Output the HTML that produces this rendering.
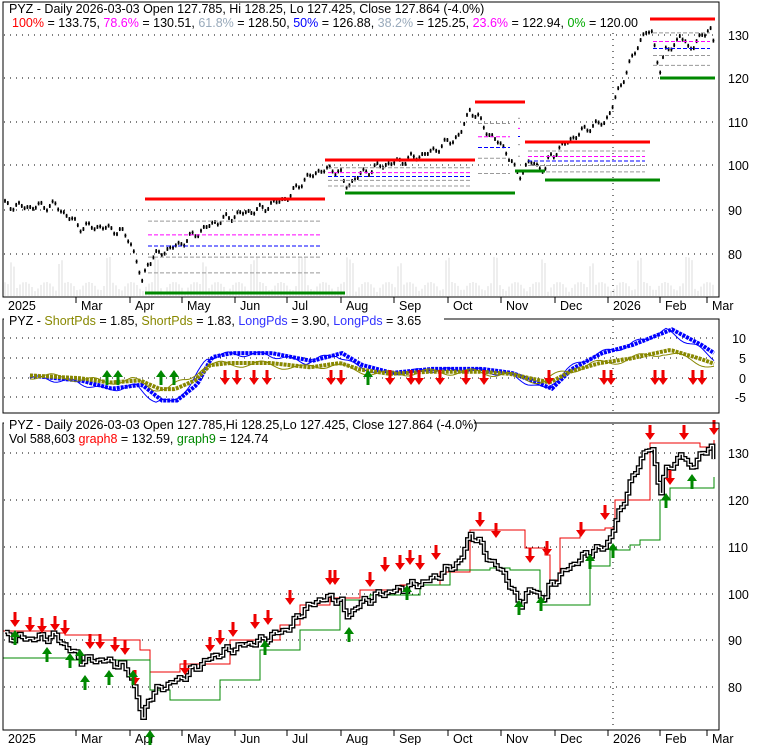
<!DOCTYPE html>
<html><head><meta charset="utf-8"><style>
body{margin:0;background:#fff;width:780px;height:745px;overflow:hidden}
svg{display:block;font-family:"Liberation Sans",sans-serif}
</style></head><body>
<svg id="s" width="780" height="745" xmlns="http://www.w3.org/2000/svg">
<rect width="780" height="745" fill="#fff"/>
<g id="g"></g>
<rect x="3" y="2" width="716" height="295" fill="none" stroke="#000"/>
<rect x="3" y="319" width="716" height="94" fill="none" stroke="#000"/>
<rect x="3" y="423" width="716" height="307" fill="none" stroke="#000"/>
<rect x="4" y="3" width="620" height="27" fill="#fff"/>
<text x="9" y="13" font-size="12.5">PYZ - Daily 2026-03-03 Open 127.785, Hi 128.25, Lo 127.425, Close 127.864 (-4.0%)</text>
<text x="12" y="27" font-size="12.5"><tspan fill="#f00">100%</tspan> = 133.75, <tspan fill="#f0f">78.6%</tspan> = 130.51, <tspan fill="#9ab">61.8%</tspan> = 128.50, <tspan fill="#00f">50%</tspan> = 126.88, <tspan fill="#9ab">38.2%</tspan> = 125.25, <tspan fill="#f0f">23.6%</tspan> = 122.94, <tspan fill="#0a0">0%</tspan> = 120.00</text>
<rect x="4" y="313" width="440" height="14" fill="#fff"/>
<text x="9" y="325" font-size="12.5">PYZ - <tspan fill="#880">ShortPds</tspan> = 1.85, <tspan fill="#880">ShortPds</tspan> = 1.83, <tspan fill="#33f">LongPds</tspan> = 3.90, <tspan fill="#33f">LongPds</tspan> = 3.65</text>
<rect x="4" y="417" width="470" height="30" fill="#fff"/>
<text x="9" y="429" font-size="12.5">PYZ - Daily 2026-03-03 Open 127.785,Hi 128.25,Lo 127.425, Close 127.864 (-4.0%)</text>
<text x="9" y="443" font-size="12.5">Vol 588,603 <tspan fill="#f00">graph8</tspan> = 132.59, <tspan fill="#080">graph9</tspan> = 124.74</text>
</svg>
<script>
var g=document.getElementById('g'),h='';
function L(x1,y1,x2,y2,c,w,d){h+='<line x1="'+x1+'" y1="'+y1+'" x2="'+x2+'" y2="'+y2+'" stroke="'+c+'" stroke-width="'+(w||1)+'"'+(d?' stroke-dasharray="'+d+'"':'')+'/>';}
function T(x,y,t,a){h+='<text x="'+x+'" y="'+y+'" font-size="12.5"'+(a?' text-anchor="'+a+'"':'')+'>'+t+'</text>';}
var months=[[8,'2025'],[81,'Mar'],[135,'Apr'],[187,'May'],[240,'Jun'],[292,'Jul'],[346,'Aug'],[399,'Sep'],[453,'Oct'],[506,'Nov'],[560,'Dec'],[613,'2026'],[665,'Feb'],[712,'Mar']];
function grid(ys,y0,y1){ys.forEach(function(y){L(4,y,718,y,'#000',1,'1 5');});L(613,y0,613,y1,'#000',1,'1 5');}
grid([35,78,122,165,210,254],3,296);
grid([338,358,378,397],320,412);
grid([453,500,547,594,640,687],424,729);
[[35,130],[78,120],[122,110],[165,100],[210,90],[254,80]].forEach(function(a){T(728,a[0]+5,a[1]);});
[[338,'10'],[358,'5'],[378,'0'],[397,'-5']].forEach(function(a){T(746,a[0]+5,a[1],'end');});
[[453,130],[500,120],[547,110],[594,100],[640,90],[687,80]].forEach(function(a){T(728,a[0]+5,a[1]);});
months.forEach(function(m,i){ if(i>0){L(m[0]-5,297,m[0]-5,303,'#000');L(m[0]-5,730,m[0]-5,736,'#000');}
 T(m[0],310,m[1]);T(m[0],743,m[1]);});
var kp=[[5,91],[30,90.5],[55,91],[65,89],[80,86],[100,86],[120,85],[130,83],[138,77],[142,73],[148,78],[160,80],[180,82],[200,85],[215,87],[240,89],[260,90],[290,93],[300,96],[320,99],[340,99],[345,95],[360,98],[380,100],[400,101],[430,103],[460,107],[470,113],[478,111],[490,107],[505,104],[515,99],[520,98],[530,101],[545,99],[550,102],[570,106],[590,109],[605,110],[615,115],[625,121],[635,126],[645,131],[652,130],[660,122],[665,126],[675,128],[680,130],[688,127],[700,129],[710,132],[714,128]];
function P(x){for(var i=1;i<kp.length;i++)if(x<=kp[i][0]){var a=kp[i-1],b=kp[i];return a[1]+(b[1]-a[1])*(x-a[0])/(b[0]-a[0]);}return 128;}
var pts=[];for(var x=5;x<=714;x+=2.8){var n=Math.sin(x*1.7)*0.6+Math.sin(x*0.37)*0.5;pts.push([x,P(x)+n]);}
for(var x=5;x<714;x+=3){var v=4+Math.abs(Math.sin(x*0.9))*10+(Math.sin(x*0.13)>0.9?25:0);L(x,296,x,296-v,'#ddd');}
pts.forEach(function(p){var y=35+(130-p[1])*4.36;L(p[0],y-2,p[0],y+2,'#000',1.6);L(p[0]-1,y,p[0]+1,y,'#000');});
var segs=[[145,325,199,293],[325,475,160,193],[475,515,102,193],[515,525,102,171],[525,650,142,180],[650,715,19,78]];
segs.forEach(function(s){var r=s[3]-s[2];[['#999',0.236],['#f0f',0.382],['#00f',0.5],['#999',0.618],['#999',0.786]].forEach(function(f){L(s[0]+3,s[2]+r*f[1],s[1]-5,s[2]+r*f[1],f[0],1,'4 2');});});
[[145,325,199],[325,475,160],[475,525,102],[525,650,142],[650,715,19]].forEach(function(s){L(s[0],s[2],s[1],s[2],'#f00',3);});
[[145,345,293],[345,515,193],[515,545,171],[545,660,180],[660,715,78]].forEach(function(s){L(s[0],s[2],s[1],s[2],'#080',3);});
var ok=[[30,0],[70,-1],[100,-3],[130,-2],[150,-6],[165,-6],[185,-2],[200,5],[220,6],[260,6],[300,4],[330,6],[350,3],[380,1],[420,2],[470,2],[500,1],[520,-1],[540,-3],[560,2],[590,6],[620,8],[660,12],[690,8],[714,4]];
function O(x,a){for(var i=1;i<a.length;i++)if(x<=a[i][0]){var p=a[i-1],q=a[i];return p[1]+(q[1]-p[1])*(x-p[0])/(q[0]-p[0]);}return a[a.length-1][1];}
function oy(v){return 378-v*3.95;}
function pl(f,c,w,sh){var s='';for(var x=30;x<=714;x+=3){s+=x+','+oy(f(x)).toFixed(1)+' ';}h+='<polyline points="'+s+'" fill="none" stroke="'+c+'" stroke-width="'+w+'"'+(sh?' stroke-dasharray="'+sh+'"':'')+'/>';}
pl(function(x){return O(x-6,ok)+Math.sin(x*0.2)*0.6;},'#00f',1);
pl(function(x){return O(x-12,ok)+0.3;},'#00f',4,'3 1');
pl(function(x){return O(x-3,ok)*0.5+0.5+Math.sin(x*0.15)*0.8;},'#880',1);
pl(function(x){return O(x-10,ok)*0.55+0.5;},'#880',4,'3 1');
function dn(x,y){h+='<path d="M'+(x-1.5)+' '+y+'h3v8h3.5l-5 7l-5-7h3.5z" fill="#e00"/>';}
function up(x,y){h+='<path d="M'+(x-1.5)+' '+y+'h3v-8h3.5l-5-7l-5 7h3.5z" fill="#080"/>';}
[107,118,161,174,368].forEach(function(x){up(x,385);});
[225,237,254,267,331,341,390,411,419,440,466,484,549,604,611,655,663,693,702].forEach(function(x){dn(x,370);});
function py(p){return 453+(130-p)*4.7;}
var s1='M'+pts[0][0]+' '+py(pts[0][1]).toFixed(1);pts.forEach(function(p,i){if(i)s1+='H'+p[0]+'V'+py(p[1]).toFixed(1);});
var rk=[[3,631],[55,633],[65,635],[100,640],[140,650],[150,672],[180,664],[230,640],[280,625],[300,605],[330,598],[360,590],[400,585],[440,572],[470,530],[520,530],[525,548],[545,555],[550,580],[560,538],[580,530],[605,528],[615,500],[650,443],[690,443],[700,447],[714,440]];
var gk=[[3,658],[40,658],[70,660],[120,660],[150,690],[170,700],[220,680],[260,650],[300,630],[340,600],[370,595],[420,585],[450,570],[490,568],[510,570],[540,605],[560,605],[590,566],[610,550],[630,545],[640,540],[660,500],[670,488],[710,488],[714,477]];
function step(a,c){var s='M'+a[0][0]+' '+a[0][1];for(var i=1;i<a.length;i++)s+='H'+a[i][0]+'V'+a[i][1];h+='<path d="'+s+'" fill="none" stroke="'+c+'" stroke-width="1"/>';}
step(rk,'#e00');step(gk,'#080');
h+='<path d="'+s1+'" fill="none" stroke="#000" stroke-width="4"/><path d="'+s1+'" fill="none" stroke="#fff" stroke-width="1.3"/>';
[[15,612],[30,617],[42,618],[55,616],[65,620],[90,634],[100,634],[115,637],[125,640],[135,670],[185,660],[210,637],[220,630],[233,622],[255,614],[268,610],[290,590],[330,570],[335,570],[370,572],[385,557],[400,555],[410,550],[420,555],[436,545],[480,512],[496,523],[530,548],[547,541],[581,522],[605,505],[650,425],[670,470],[684,425],[714,420]].forEach(function(a){dn(a[0],a[1]);});
[[15,645],[47,662],[70,668],[80,664],[85,690],[109,685],[133,685],[150,745],[265,655],[349,642],[407,600],[519,615],[541,611],[590,569],[613,558],[666,508],[692,489]].forEach(function(a){up(a[0],a[1]);});
g.innerHTML=h;
</script>
</body></html>
